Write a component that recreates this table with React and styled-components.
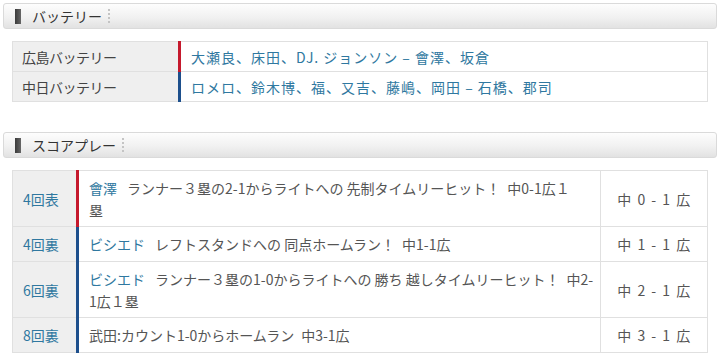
import React from 'react';
import styled, { createGlobalStyle } from 'styled-components';

const GlobalStyle = createGlobalStyle`
  body {
    margin: 0;
    background: #fff;
    font-family: "Noto Sans CJK JP", "Noto Sans", sans-serif;
    color: #444;
  }
`;

const Page = styled.div`
  width: 720px;
  padding: 3px 3px 0;
  box-sizing: border-box;
`;

const Section = styled.section`
  margin-bottom: ${p => p.$gap || 0}px;
`;

const Heading = styled.h2`
  display: flex;
  align-items: center;
  height: 26px;
  margin: 0;
  padding-left: 11px;
  border: 1px solid #dadada;
  border-radius: 3px;
  background: linear-gradient(#fdfdfd, #f1f1f1 55%, #e2e2e2);
  font-size: 14px;
  font-weight: normal;
  color: #333;
  box-sizing: border-box;
`;

const Mark = styled.span`
  width: 6px;
  height: 15px;
  margin-right: 11px;
  background: linear-gradient(90deg, #3a3a3a, #666);
`;

const Dots = styled.span`
  width: 0;
  height: 14px;
  margin-left: 6px;
  border-left: 2px dotted #c4c4c4;
`;

const Table = styled.table`
  width: 696px;
  margin: ${p => p.$top}px 0 0 9px;
  border-collapse: collapse;
  font-size: 14px;
  line-height: 22px;
  td {
    border: 1px solid #e0e0e0;
  }
`;

const Label = styled.td`
  width: 156px;
  height: 29px;
  padding: 0 0 0 9px;
  background: #efefef;
  color: #444;
  letter-spacing: -0.5px;
`;

const Inning = styled.td`
  width: 53px;
  padding: 0 0 0 10px;
  background: #efefef;
  color: #2f78a0;
`;

const Body = styled.td`
  border-left: 3px solid ${p => (p.$team === 'hiroshima' ? '#c5192d' : '#1d4f8c')} !important;
  padding: ${p => p.$pad || '0 8px 0 10px'};
  height: ${p => p.$h}px;
  box-sizing: border-box;
  color: #555;
`;

const Players = styled.span`
  color: #2f78a0;
  letter-spacing: 1px;
`;

const Line = styled.span`
  display: block;
  white-space: nowrap;
`;

const Name = styled.span`
  color: #2f78a0;
  margin-right: 10px;
`;

const Score = styled.td`
  width: 104px;
  text-align: center;
  color: #555;
  letter-spacing: 0.5px;
  word-spacing: 2px;
`;

const battery = [
  { team: 'hiroshima', label: '広島バッテリー', players: '大瀬良、床田、DJ. ジョンソン – 會澤、坂倉' },
  { team: 'chunichi', label: '中日バッテリー', players: 'ロメロ、鈴木博、福、又吉、藤嶋、岡田 – 石橋、郡司' },
];

const plays = [
  { inning: '4回表', team: 'hiroshima', name: '會澤', lines: ['ランナー３塁の2-1からライトへの 先制タイムリーヒット！\u2002中0-1広１', '塁'], score: '中 0 - 1 広', h: 56 },
  { inning: '4回裏', team: 'chunichi', name: 'ビシエド', lines: ['レフトスタンドへの 同点ホームラン！\u2002中1-1広'], score: '中 1 - 1 広', h: 35 },
  { inning: '6回裏', team: 'chunichi', name: 'ビシエド', lines: ['ランナー３塁の1-0からライトへの 勝ち 越しタイムリーヒット！\u2002中2-', '1広１塁'], score: '中 2 - 1 広', h: 56 },
  { inning: '8回裏', team: 'chunichi', name: null, lines: ['武田:カウント1-0からホームラン\u2002中3-1広'], score: '中 3 - 1 広', h: 35 },
];

const App = () => {
  return (
    <Page>
      <GlobalStyle />
      <Section $gap={30}>
        <Heading><Mark />バッテリー<Dots /></Heading>
        <Table $top={12}>
          <tbody>
            {battery.map(b => (
              <tr key={b.team}>
                <Label>{b.label}</Label>
                <Body $team={b.team} $h={30}><Players>{b.players}</Players></Body>
              </tr>
            ))}
          </tbody>
        </Table>
      </Section>
      <Section>
        <Heading><Mark />スコアプレー<Dots /></Heading>
        <Table $top={12}>
          <tbody>
            {plays.map(p => (
              <tr key={p.inning + p.score}>
                <Inning>{p.inning}</Inning>
                <Body $team={p.team} $h={p.h} $pad="5px 2px 5px 10px">
                  {p.lines.map((l, i) => (
                    <Line key={i}>
                      {i === 0 && p.name && <Name>{p.name}</Name>}
                      {l}
                    </Line>
                  ))}
                </Body>
                <Score>{p.score}</Score>
              </tr>
            ))}
          </tbody>
        </Table>
      </Section>
    </Page>
  );
};

export default App;
